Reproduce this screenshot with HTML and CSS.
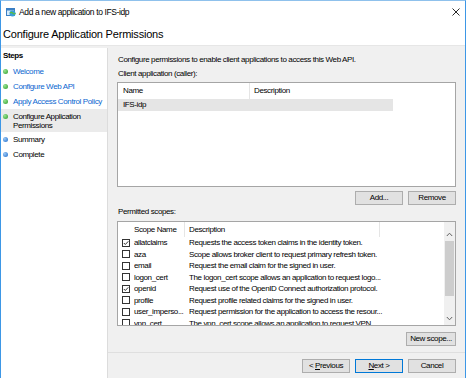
FILE: index.html
```html
<!DOCTYPE html>
<html>
    <head>
        <meta charset="utf-8">
        <title>Add a new application to IFS-idp</title>
        <link rel="stylesheet" href="styles.css">
    </head>
    <body>
        <div class="window">
            <div class="titlebar">
                <svg class="app-icon" width="10" height="10" viewBox="0 0 10 10">
                    <rect x="0.5" y="1.5" width="8" height="7" fill="#d6eafb" stroke="#3b7fc4"/>
                    <rect x="0.5" y="1.5" width="8" height="2" fill="#3b7fc4"/>
                    <circle cx="6.5" cy="6.5" r="3" fill="#3a9ed8"/>
                    <path d="M4 6 Q5.5 4.5 6.8 6.2 Q8 7.8 9.5 6.2" stroke="#5cbf3a" stroke-width="1.2" fill="none"/>
                </svg>
                <span class="title">Add a new application to IFS-idp</span>
                <svg class="close" width="8" height="8" viewBox="0 0 8 8">
                    <path d="M0.5 0.5 L7.5 7.5 M7.5 0.5 L0.5 7.5" stroke="#111" stroke-width="0.9"/>
                </svg>
            </div>
            <div class="page-head">Configure Application Permissions</div>
            <div class="body">
                <div class="steps">
                    <div class="steps-head">Steps</div>
                    <ul class="step-list">
                        <li class="done link">Welcome</li>
                        <li class="done link">Configure Web API</li>
                        <li class="done link">Apply Access Control Policy</li>
                        <li class="done current">Configure Application<br>Permissions</li>
                        <li class="todo">Summary</li>
                        <li class="todo">Complete</li>
                    </ul>
                </div>
                <div class="main">
                    <div class="content">
                        <p class="label">Configure permissions to enable client applications to access this Web API.</p>
                        <p class="label gap">Client application (caller):</p>
                        <div class="listbox clients">
                            <div class="crow head">
                                <span class="c-name">Name</span>
                                <span class="c-desc">Description</span>
                            </div>
                            <div class="crow selected">
                                <span class="c-name">IFS-idp</span>
                                <span class="c-desc"></span>
                            </div>
                        </div>
                        <div class="btn-row top-btns">
                            <button class="btn">Add...</button>
                            <button class="btn">Remove</button>
                        </div>
                        <p class="label scopes-label">Permitted scopes:</p>
                        <div class="listbox scopes">
                            <div class="scope-table">
                                <div class="srow head">
                                    <span class="h-name">Scope Name</span>
                                    <span class="h-desc">Description</span>
                                </div>
                                <div class="srow">
                                    <span class="s-check"><svg width="8" height="8" viewBox="0 0 8 8"><rect x="0.5" y="0.5" width="7" height="7" fill="#fff" stroke="#333"/><polyline points="1.8,4 3.3,5.5 6.3,2.3" fill="none" stroke="#333"/></svg></span>
                                    <span class="s-name">allatclaims</span>
                                    <span class="s-desc">Requests the access token claims in the identity token.</span>
                                </div>
                                <div class="srow">
                                    <span class="s-check"><svg width="8" height="8" viewBox="0 0 8 8"><rect x="0.5" y="0.5" width="7" height="7" fill="#fff" stroke="#333"/></svg></span>
                                    <span class="s-name">aza</span>
                                    <span class="s-desc">Scope allows broker client to request primary refresh token.</span>
                                </div>
                                <div class="srow">
                                    <span class="s-check"><svg width="8" height="8" viewBox="0 0 8 8"><rect x="0.5" y="0.5" width="7" height="7" fill="#fff" stroke="#333"/></svg></span>
                                    <span class="s-name">email</span>
                                    <span class="s-desc">Request the email claim for the signed in user.</span>
                                </div>
                                <div class="srow">
                                    <span class="s-check"><svg width="8" height="8" viewBox="0 0 8 8"><rect x="0.5" y="0.5" width="7" height="7" fill="#fff" stroke="#333"/></svg></span>
                                    <span class="s-name">logon_cert</span>
                                    <span class="s-desc">The logon_cert scope allows an application to request logo...</span>
                                </div>
                                <div class="srow">
                                    <span class="s-check"><svg width="8" height="8" viewBox="0 0 8 8"><rect x="0.5" y="0.5" width="7" height="7" fill="#fff" stroke="#333"/><polyline points="1.8,4 3.3,5.5 6.3,2.3" fill="none" stroke="#333"/></svg></span>
                                    <span class="s-name">openid</span>
                                    <span class="s-desc">Request use of the OpenID Connect authorization protocol.</span>
                                </div>
                                <div class="srow">
                                    <span class="s-check"><svg width="8" height="8" viewBox="0 0 8 8"><rect x="0.5" y="0.5" width="7" height="7" fill="#fff" stroke="#333"/></svg></span>
                                    <span class="s-name">profile</span>
                                    <span class="s-desc">Request profile related claims for the signed in user.</span>
                                </div>
                                <div class="srow">
                                    <span class="s-check"><svg width="8" height="8" viewBox="0 0 8 8"><rect x="0.5" y="0.5" width="7" height="7" fill="#fff" stroke="#333"/></svg></span>
                                    <span class="s-name">user_imperso...</span>
                                    <span class="s-desc">Request permission for the application to access the resour...</span>
                                </div>
                                <div class="srow">
                                    <span class="s-check"><svg width="8" height="8" viewBox="0 0 8 8"><rect x="0.5" y="0.5" width="7" height="7" fill="#fff" stroke="#333"/></svg></span>
                                    <span class="s-name">vpn_cert</span>
                                    <span class="s-desc">The vpn_cert scope allows an application to request VPN ...</span>
                                </div>
                            </div>
                            <div class="scrollbar">
                                <div class="sb-up"><svg width="7" height="5" viewBox="0 0 7 5"><polyline points="0.8,4 3.5,1.2 6.2,4" fill="none" stroke="#606060"/></svg></div>
                                <div class="sb-thumb"></div>
                                <div class="sb-track"></div>
                                <div class="sb-down"><svg width="7" height="5" viewBox="0 0 7 5"><polyline points="0.8,1 3.5,3.8 6.2,1" fill="none" stroke="#606060"/></svg></div>
                            </div>
                        </div>
                        <div class="btn-row new-btn">
                            <button class="btn wide">New scope...</button>
                        </div>
                    </div>
                    <div class="footer">
                        <button class="btn">&lt; <u>P</u>revious</button>
                        <button class="btn default"><u>N</u>ext &gt;</button>
                        <button class="btn">Cancel</button>
                    </div>
                </div>
            </div>
        </div>
    </body>
</html>
```

FILE: styles.css
```css
*{
    margin:0;
    padding:0;
    box-sizing:border-box;
}
ul,li{
    list-style:none;
}
body{
    width:466px;
    height:378px;
    overflow:hidden;
    font-family:"Liberation Sans", Arial, sans-serif;
    font-size:8px;
    letter-spacing:-0.38px;
    color:#000;
    background:#fff;
}
.window{
    width:466px;
    height:378px;
    display:flex;
    flex-direction:column;
    border:1px solid #3d97e6;
    border-top-color:#8fc1ec;
    border-bottom:none;
    background:#fff;
}

/* title bar */
.titlebar{
    height:21px;
    display:flex;
    align-items:center;
    padding-left:5px;
}
.app-icon{
    display:block;
    margin-right:3px;
}
.title{
    font-size:8.5px;
}
.close{
    display:block;
    margin-left:auto;
    margin-right:5px;
}
.page-head{
    height:24px;
    padding:1px 0 0 2px;
    font-size:11px;
    letter-spacing:-0.2px;
    line-height:22px;
    border-bottom:1px solid #e6e6e6;
}

/* body */
.body{
    flex:1;
    display:flex;
    padding-top:2px;
    background:#f0f0f0;
}
.steps{
    width:107px;
    background:#fff;
    border-right:1px solid #dcdcdc;
}
.steps-head{
    height:16px;
    line-height:16px;
    padding-left:2px;
    font-weight:bold;
}
.step-list li{
    display:flex;
    height:15px;
    line-height:15px;
    padding-left:2px;
}
.step-list li:before{
    content:'';
    flex-shrink:0;
    width:5px;
    height:5px;
    margin:5px 5px 0 0;
    border-radius:50%;
}
.step-list li.done:before{
    background:radial-gradient(circle at 35% 35%, #9be594, #2a9a27);
}
.step-list li.todo:before{
    background:radial-gradient(circle at 35% 35%, #9cc9f5, #1c6acb);
}
.step-list li.link{
    color:#0a66d0;
}
.step-list li.current{
    height:23px;
    line-height:9px;
    padding-top:3px;
    background:#ebebeb;
}
.step-list li.current:before{
    margin-top:2px;
}

/* right pane */
.main{
    flex:1;
    display:flex;
    flex-direction:column;
}
.content{
    flex:1;
    padding:6px 9px 0 9px;
}
.label{
    height:12px;
    line-height:12px;
    padding-left:1px;
}
.label.gap{
    margin-top:2px;
}
.listbox{
    background:#fff;
    border:1px solid #a5a5a5;
    overflow:hidden;
}
.clients{
    height:105px;
    margin-top:2px;
}
.crow{
    display:flex;
    width:275px;
    height:12px;
    line-height:12px;
}
.crow.head{
    height:16px;
    line-height:16px;
}
.crow.selected{
    background:#e5e5e5;
}
.c-name{
    width:132px;
    padding-left:5px;
}
.c-desc{
    width:143px;
    padding-left:4px;
}
.crow.head .c-name{
    border-right:1px solid #e5e5e5;
}

.btn-row{
    display:flex;
    justify-content:flex-end;
    gap:5px;
}
.top-btns{
    margin-top:4px;
}
.scopes-label{
    margin-top:1px;
}
.new-btn{
    margin-top:6px;
}
.btn{
    width:48px;
    height:14px;
    border:1px solid #adadad;
    background:#e1e1e1;
    font:inherit;
    letter-spacing:inherit;
    line-height:12px;
    color:#000;
    text-align:center;
}
.btn.wide{
    width:50px;
}
.btn.default{
    border-color:#0078d7;
}

/* scopes list */
.scopes{
    display:flex;
    height:105px;
    margin-top:3px;
}
.scope-table{
    flex:1;
    overflow:hidden;
}
.srow{
    display:flex;
    align-items:center;
    height:11.5px;
    white-space:nowrap;
}
.srow.head{
    height:15px;
}
.h-name{
    width:67px;
    padding-left:16px;
    line-height:15px;
    border-right:1px solid #e5e5e5;
}
.h-desc{
    width:195px;
    padding-left:4px;
    line-height:15px;
    border-right:1px solid #e5e5e5;
}
.s-check{
    width:16px;
    padding-left:4px;
    display:flex;
}
.s-name{
    width:51px;
    overflow:hidden;
}
.s-desc{
    flex:1;
    padding-left:4px;
}
.scrollbar{
    width:11px;
    display:flex;
    flex-direction:column;
    background:#f0f0f0;
}
.sb-up{
    height:18px;
    display:flex;
    align-items:flex-end;
    justify-content:center;
    padding-bottom:3px;
}
.sb-thumb{
    height:55px;
    margin:1px 1px 0;
    background:#cdcdcd;
}
.sb-track{
    flex:1;
}
.sb-down{
    height:13px;
    display:flex;
    align-items:center;
    justify-content:center;
}
.scrollbar svg{
    display:block;
}

.footer{
    height:26px;
    display:flex;
    justify-content:flex-end;
    gap:5px;
    padding:6px 9px 0 0;
    border-top:1px solid #dfdfdf;
}
```
